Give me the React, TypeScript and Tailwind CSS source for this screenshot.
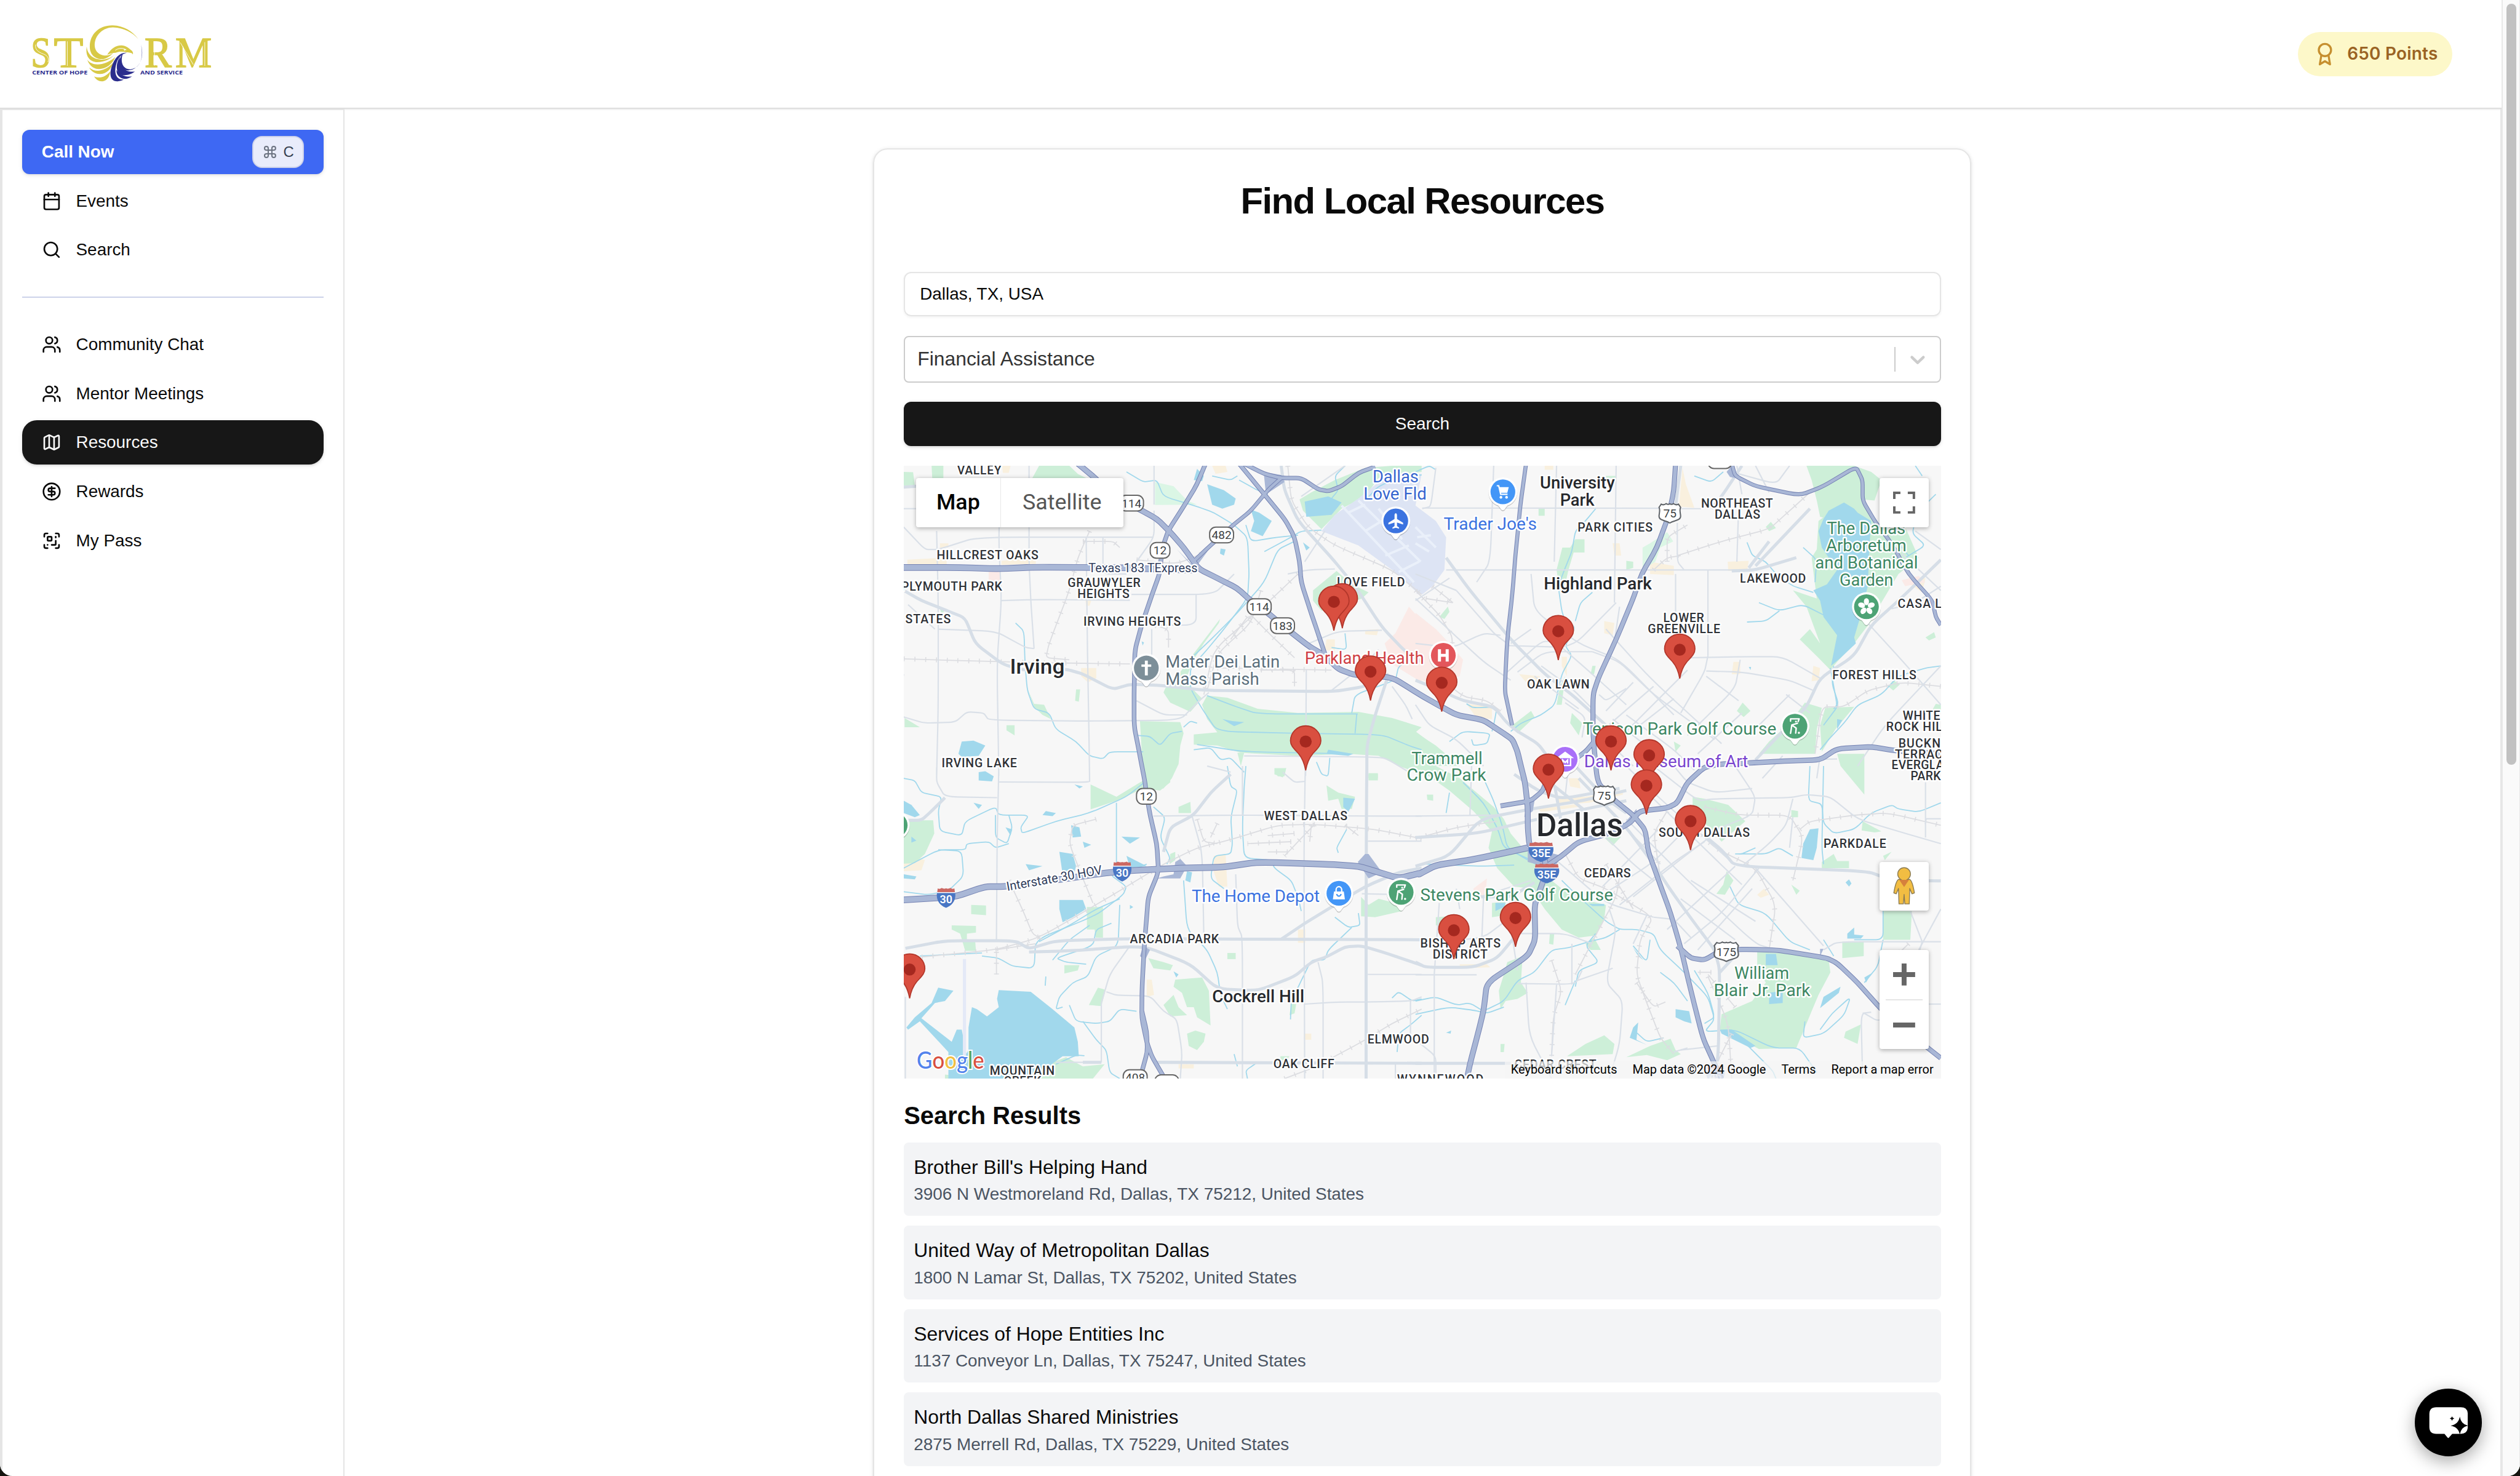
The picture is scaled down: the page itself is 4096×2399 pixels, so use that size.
import React from "react";
import { Calendar, CircleDollarSign, Command, Map as MapIcon, Search, Users } from "lucide-react";

/* ------------------------------------------------------------------ */
/* Map geometry: coordinates are stored per tile (A/B over C/D) and    */
/* projected to the 846x500 map canvas.                                */
/* ------------------------------------------------------------------ */

const TILES: Record<string, [number, number, number]> = {
  A: [0.27423, -7.5, -5],
  B: [0.27743, 417.5, -5],
  C: [0.27423, -7.5, 245],
  D: [0.27743, 417.5, 245],
};

type Pt = [number, number];

function at(tile: string, x: number, y: number): Pt {
  const [s, ox, oy] = TILES[tile];
  return [+(x * s + ox).toFixed(1), +(y / 6 + oy).toFixed(1)];
}

function points(spec: string): Pt[] {
  const out: Pt[] = [];
  let tile = "A";
  let pending: number | null = null;
  for (const tok of spec.split(/\s+/)) {
    if (!tok) continue;
    if (TILES[tok]) {
      tile = tok;
      continue;
    }
    if (pending === null) pending = +tok;
    else {
      out.push(at(tile, pending, +tok));
      pending = null;
    }
  }
  return out;
}

function area(spec: string) {
  return "M" + points(spec).map((p) => p.join(" ")).join("L") + "Z";
}

function line(spec: string) {
  const p = points(spec);
  if (p.length < 3) return "M" + p.map((q) => q.join(" ")).join("L");
  let d = "M" + p[0].join(" ");
  for (let i = 1; i < p.length - 1; i++) {
    const a = p[i - 1];
    const b = p[i];
    const c = p[i + 1];
    const k = 0.75;
    const s1 = [b[0] + (a[0] - b[0]) * (1 - k), b[1] + (a[1] - b[1]) * (1 - k)];
    const s2 = [b[0] + (c[0] - b[0]) * (1 - k), b[1] + (c[1] - b[1]) * (1 - k)];
    d += `L${s1[0].toFixed(1)} ${s1[1].toFixed(1)}Q${b[0]} ${b[1]} ${s2[0].toFixed(1)} ${s2[1].toFixed(1)}`;
  }
  return d + "L" + p[p.length - 1].join(" ");
}

const AIRPORT = "A 1270 350 1310 270 1380 190 1440 110 1500 75 1568 70 B 0 225 60 300 90 380 85 540 50 620 20 660 0 650 A 1568 670 1480 540 1380 420";

const RUNWAYS = [
  "A 1330 225 1545 600", "A 1380 200 1565 500", "A 1350 260 1400 220", "A 1400 350 1450 300", "A 1460 470 1530 420",
  "A 1500 550 1560 500", "B 0 330 60 430", "B 0 410 40 450", "A 1440 240 1510 390", "B 5 380 45 370",
];

const PINK = [
  "A 1530 720 1568 790 1568 1090 1480 1000 1458 900 1490 850",
  "B 0 750 60 830 100 900 140 980 130 1060 70 1100 20 1080 0 1070",
  "A 280 545 315 545 315 595 280 595",
  "D 170 600 210 550 205 640 175 640",
  "B 1430 590 1480 570 1500 600 1440 620",
];

const BEIGE = [
  "A 38 490 155 480 155 515 38 515", "A 318 495 420 480 420 510 318 515", "A 555 1020 600 1020 600 1070 575 1090 555 1060",
  "A 320 30 345 30 340 65 322 65", "A 945 30 985 30 990 60 955 70", "A 1400 835 1440 830 1435 860 1400 855",
  "A 1285 880 1310 880 1310 945 1280 930", "A 568 690 585 690 580 715 570 715", "A 135 410 160 410 160 430 135 430",
  "C 950 440 985 430 990 590 965 590 950 520", "C 750 1045 765 1045 772 1120 750 1130", "C 1200 800 1222 800 1222 865 1200 865",
  "C 27 478 60 440 90 460 80 510 27 515", "C 1218 1310 1240 1310 1240 1340 1218 1340", "C 845 1460 890 1460 890 1480 845 1480",
  "B 380 30 405 30 405 50 380 50", "B 580 410 600 410 605 470 585 470", "B 690 500 760 520 760 565 690 560",
  "B 918 500 980 495 975 545 920 545", "B 785 40 795 120 820 235 775 230", "B 430 965 445 965 445 1060 430 1010",
  "B 150 1195 225 1210 225 1270 180 1265", "B 305 1050 365 1060 370 1120 330 1100", "B 555 790 585 800 580 860 555 850",
  "B 935 990 955 990 955 1050 930 1050", "B 1170 1010 1190 1020 1185 1080 1165 1085", "B 1450 570 1500 580 1490 650 1455 610",
  "D 420 150 500 150 610 125 610 140 510 180 420 190", "D 130 970 210 970 220 985 130 990", "D 1005 630 1025 600 1040 630 1015 645",
  "D 450 60 480 60 485 110 455 100", "D 360 210 480 185 480 200 370 225",
];

const GREEN = [
  "A 27 60 55 62 60 125 27 128", "A 110 30 145 30 145 90 112 90", "A 410 90 430 30 520 30 545 70 570 90",
  "A 1205 195 1240 160 1310 100 1400 40 1480 30 1568 30 1568 60 1440 90 1400 180 1330 240 1270 340 1215 250",
  "A 968 780 885 960 850 1040 805 1120 800 1140 820 1190 880 1235 915 1170 885 1120 870 1060 890 980 920 900 965 800",
  "A 930 1155 990 1165 1080 1220 1200 1240 1380 1235 1480 1265 1568 1310 B 0 1335 60 1400 130 1500 D 60 0 130 60 180 130 230 200 260 260 280 330 310 390 350 450 400 560 430 600 460 640 560 680 555 750 530 830 480 840 430 800 380 700 340 600 290 590 240 500 215 400 225 320 170 220 100 120 40 50 0 10 C 1560 0 A 1550 1530 1500 1500 1440 1450 1350 1440 1200 1450 1030 1435 960 1400 890 1395 890 1345 960 1335 930 1270 915 1200",
  "A 730 1280 850 1285 860 1340 850 1400 845 1490 825 1560 C 800 110 770 118 745 95 A 742 1560 735 1430",
  "C 583 90 660 150 740 70 820 10 820 80 790 120 740 110 660 170 583 212",
  "C 27 265 115 265 118 330 90 430 60 475 27 478", "C 835 1045 880 1040 915 1035 935 1100 940 1270 900 1230 890 1180 870 1180 855 1110 830 1080",
  "C 800 1170 830 1120 845 1180 870 1220 820 1225", "C 870 1310 895 1295 925 1310 920 1350 900 1390 875 1370",
  "C 605 1085 628 1095 615 1175 578 1170", "C 470 1450 510 1425 560 1470 625 1460 590 1530 420 1530",
  "C 755 940 800 960 828 975 820 1000 770 990", "C 572 690 620 690 620 840 598 840 595 800 572 800", "C 170 780 242 783 242 815 215 820 215 860 240 860 242 905 210 905 195 820 170 800",
  "C 228 680 272 683 272 730 228 725", "C 845 200 880 175 882 230 845 230", "C 1285 95 1320 130 1370 150 1360 210 1330 210 1320 160 1290 170",
  "C 1388 640 1410 680 1440 650 1510 680 1510 710 1430 740 1388 735", "C 1180 1165 1195 1165 1190 1210 1175 1220", "C 990 915 1015 915 1015 945 990 945",
  "C 505 975 550 975 545 1000 505 1015", "C 820 430 835 420 835 460 818 480", "C 1148 1420 1175 1420 1165 1440 1148 1440", "C 150 1510 200 1520 200 1530 150 1530",
  "A 1315 545 1360 610 1410 650 1390 680 1330 720 1270 740 1245 690 1245 640", "A 540 1125 552 1125 548 1185 537 1180", "A 333 1300 357 1300 357 1350 333 1325",
  "A 30 1265 75 1310 30 1310", "A 395 1120 415 1195 445 1200 465 1270 440 1250 415 1210", "A 1020 1435 1040 1435 1030 1500", "A 1130 1520 1165 1510 1160 1550 1140 1550",
  "A 1410 1540 1438 1540 1438 1560 1410 1560", "C 1410 35 1438 35 1438 70 1410 70", "C 1130 10 1165 10 1155 55 1130 40", "A 135 730 155 730 140 755",
  "B 1150 30 1290 30 1340 60 1370 100 1350 200 1315 195 1300 280 1240 300 1190 280 1180 200 1165 100",
  "B 1165 480 1180 440 1185 300 1260 205 1320 200 1360 310 1440 330 1480 480 1420 560 1370 700 1340 790 1290 900 1240 990 1220 1030 1185 970 1130 880 1160 830 1190 900 1150 720 1110 640 1180 680",
  "B 1145 1190 1195 1215 1180 1320 1175 1440 1010 1440 1040 1380 1100 1290", "B 1205 1215 1290 1210 1235 1320 1195 1430 1190 1300",
  "B 1240 1440 1320 1440 1320 1560 D 1320 140 1250 0", "B 470 390 497 390 497 455 465 455 450 540 440 610 425 650 415 540 432 430 455 430",
  "B 362 240 380 240 380 275 362 275", "B 620 495 640 500 640 530 620 540", "B 560 80 590 80 590 90 560 90", "B 1030 330 1045 305 1060 335 1040 350",
  "B 70 770 95 720 100 745 85 780", "B 425 1110 440 1060 430 1200 415 1200", "B 460 1240 490 1290 480 1350 455 1290", "B 285 1300 340 1230 350 1260 300 1340",
  "B 945 1230 962 1190 985 1230 965 1260", "B 1390 1110 1405 1080 1425 1100 1405 1130", "B 0 1330 40 1380 70 1420 0 1430", "B 1500 870 1525 845 1530 870 1510 885",
  "B 760 1380 780 1400 765 1430", "B 520 1010 530 1010 525 1050 515 1050", "B 1545 1200 1530 1195 1520 1225 1545 1225",
  "D 815 150 850 160 920 190 970 270 900 370 870 310 830 250 815 200", "D 555 350 605 345 580 390", "D 905 580 915 515 935 560 910 630 885 625",
  "D 1005 910 1080 915 1215 950 1220 1010 1185 1120 1165 1200 1140 1300 1120 1380 1010 1385 960 1340 895 1290 900 1215 990 1150 1030 1060 1005 1000",
  "D 1375 710 1460 710 1455 850 1375 850", "D 1255 860 1318 860 1318 930 1255 940", "D 445 1420 500 1360 555 1318 585 1360 580 1410",
  "D 620 1425 690 1370 750 1335 765 1390 780 1410 740 1440 680 1415", "D 1195 470 1230 430 1240 465 1275 465 1275 500 1195 500",
  "D 250 1190 245 1100 260 1020 270 960 315 930 310 1060 330 1110 300 1140 265 1150", "D 225 670 265 665 265 730 225 740", "D 500 870 525 840 545 900 515 900",
  "D 395 820 408 820 405 875 393 870", "D 1105 215 1125 220 1125 250 1105 250", "D 1315 270 1370 320 1350 325 1312 315", "D 1375 440 1400 420 1380 460",
  "D 1265 1300 1310 1265 1300 1360 1260 1330", "D 33 140 52 140 52 170 35 165", "D 250 1360 262 1360 260 1400 250 1400", "D 1105 580 1130 610 1120 630", "D 60 740 100 735 100 790 60 780",
];

const PALE = ["A 775 110 830 130 870 200 900 220 775 222", "B 668 430 690 410 740 355 758 400 720 430 705 500 668 540"];

const WATER = [
  "C 310 1097 405 1105 470 1190 535 1280 545 1350 548 1420 500 1420 450 1480 400 1530 160 1530 200 1450 220 1390 220 1280 230 1180 245 1190 275 1225 310 1180 305 1140",
  "C 130 1085 175 1100 150 1150 120 1160 80 1235 170 1350 185 1290 200 1290 215 1420 200 1530 160 1530 160 1400 75 1250 40 1290 35 1280 60 1230 110 1160",
  "B 1200 290 1215 250 1260 210 1290 240 1300 260 1340 300 1335 420 1330 620 1310 760 1290 870 1295 900 1250 970 1222 1010 1240 860 1200 770 1190 690 1170 640 1210 610 1240 540 1195 430 1185 350",
  "A 930 120 980 150 1015 190 1010 220 975 240 945 220", "A 1060 245 1085 260 1122 300 1095 375 1060 350 1070 300", "A 1220 205 1290 180 1330 210 1300 270 1225 280",
  "A 190 1440 200 1380 235 1375 270 1400 250 1450 200 1455", "A 900 45 920 80 915 105 890 100", "C 250 30 270 25 295 50 290 75 250 70",
  "A 970 435 985 440 980 470 968 460", "A 1215 405 1235 430 1225 445", "A 975 1270 1005 1280 1040 1285 1010 1305", "A 1290 1420 1365 1440 1350 1450 1285 1440",
  "C 525 290 550 300 555 345 530 350", "C 490 420 530 430 540 490 530 550 500 530", "C 490 655 560 655 570 700 530 740 500 765 490 700", "C 690 440 750 490 700 500",
  "C 870 515 885 520 880 570 865 560", "C 1335 155 1370 160 1350 225 1335 200", "C 27 170 50 190 75 240 60 250 27 230", "C 235 180 260 190 250 210", "C 330 300 350 310 345 340",
  "C 560 370 585 385 565 400", "C 675 345 730 350 700 380", "C 27 530 65 540 60 555 27 550", "C 50 345 65 365 50 375", "C 830 1005 845 1020 838 1035", "C 390 480 440 490 400 510", "C 700 680 710 690 700 700",
  "D 1160 310 1185 305 1180 400 1170 460 1135 450 1140 380", "D 765 1190 805 1200 812 1260 790 1250 765 1230", "D 1030 920 1060 920 1065 975 1030 975",
  "D 1200 1130 1250 1080 1245 1110 1190 1185", "D 1270 820 1290 790 1290 825 1318 830 1310 845 1270 845", "D 640 1280 655 1255 650 1340 680 1365 630 1330",
  "D 510 675 555 675 555 685 520 685", "D 235 670 265 670 260 690 235 710", "D 1265 570 1275 555 1282 575 1275 590", "D 895 1290 930 1290 1000 1370 985 1380 900 1310",
  "D 1040 1110 1080 1100 1080 1160 1040 1165", "D 640 890 670 950 655 930", "D 90 1305 105 1295 103 1310", "D 1320 1035 1340 1015 1325 1060",
  "B 980 1015 987 1015 985 1030", "B 1240 1270 1255 1275 1240 1320", "A 735 890 742 895 738 910", "C 450 220 480 230 470 245 440 240", "C 535 90 560 100 550 110",
];

const STREAMS = [
  "A 360 800 385 840 388 1000 395 1130 415 1220 460 1240 480 1320 540 1380 580 1450 620 1465 640 1430 740 1430",
  "A 1568 75 1500 90 1440 130 1400 200", "A 690 60 740 110 780 100 800 180 900 230 950 260 1010 320 1050 380 1055 560 1050 680 980 830 930 930 880 1020 880 1120 915 1220 960 1330 1200 1340 1450 1345 1530 1400 1568 1420",
  "A 1100 450 1180 380 1210 350 1270 345", "A 930 1155 1000 1200 1080 1245 1378 1245", "A 900 1395 1040 1430 1340 1440", "A 1340 30 1310 80 1320 150 1300 190",
  "A 725 1350 760 1355 790 1400 820 1340 855 1330", "A 860 1310 880 1280 900 1290", "A 890 1420 940 1410 970 1470 1000 1460 1040 1530", "A 1255 1480 1270 1540 1290 1550 1295 1460",
  "A 1300 920 1345 930 1340 850", "A 1568 950 1500 1010 1490 1080 1370 1150 1360 1240", "A 1375 1245 1370 1340", "A 1045 320 1060 400 1140 380 1200 370", "A 1025 100 1080 150 1110 170", "A 945 80 1000 100 1020 80",
  "A 1190 400 1140 440 1100 600 1020 750 960 850 890 960", "C 990 0 1000 100 1020 120 1000 250 1005 380 1000 430 950 440 940 550 980 600", "C 1045 0 1040 100 1035 300 1040 450 1120 460 1130 500 1180 560 1200 640 1210 710",
  "C 770 200 805 250 790 350 820 450 810 480", "C 750 480 720 500 640 530 690 590 680 630 600 730 420 850 415 990 350 980 310 940 260 930",
  "C 27 60 60 70 80 130 140 150 130 220 135 320 200 340 210 270 300 200 310 240 400 240 375 300 380 330 480 270 580 230 690 150 750 70",
  "C 300 240 300 350 335 380 350 300 340 240", "C 27 500 130 410 210 410 215 380 280 370 300 400 340 380", "C 130 410 200 415 205 540 160 610 100 630 27 615", "C 660 180 660 500", "C 75 930 260 915",
  "C 670 680 665 880 600 930 575 1030 530 1060 490 1130 480 1190 500 1180", "C 645 770 600 800 590 880 480 940 510 960 570 970", "C 860 560 870 800 930 900 960 1010 970 1120 990 1190",
  "C 520 1170 540 1250 600 1260 640 1250 670 1190 720 1200", "C 560 1250 600 1340 630 1390 640 1500 670 1530", "C 1310 740 1350 790 1385 780 1380 720", "C 1360 790 1290 900 1280 950 1240 950 1210 1050 1180 1150 1178 1240",
  "C 1568 1220 1540 1260 1500 1310 1495 1400", "C 1480 1135 1500 1105 1540 1150 1568 1140", "C 1010 1410 1020 1470", "C 1050 1530 1045 1490 1080 1450", "C 1320 425 1315 400 1345 310", "C 450 1030 448 1075", "C 580 780 520 850 470 950",
  "C 480 1460 540 1415 565 1418", "C 430 860 520 780 600 700 670 650", "C 655 540 690 500",
  "B 530 240 500 300 470 350 460 450 440 530 420 620 430 740 440 790 470 820 440 910 460 960 430 1050 410 1200 370 1250 310 1290 280 1330", "B 520 650 485 700 470 790", "B 0 60 40 30 60 50",
  "B 975 405 990 470 1030 500 1060 560 1110 620 1170 650", "B 1140 430 1180 490 1175 600", "B 1010 700 1070 740 1140 710 1200 760", "B 975 795 1030 790 1070 740", "B 820 80 870 110 905 60", "B 1470 30 1490 80",
  "B 1230 1010 1225 1100 1245 1200 1200 1300", "B 1220 1020 1240 1200 1230 1220", "B 1545 1010 1500 1020 1420 1060 1370 1150 1300 1200 1260 1290 1220 1360 1190 1420", "B 1530 170 1480 250 1460 360 1500 420 1440 480",
  "B 150 1195 170 1215 240 1210 230 1300 225 1330", "B 100 1380 140 1330 220 1340 210 1390 170 1400 165 1370", "B 1420 410 1450 470", "D 1000 400 960 430 940 430",
  "D 100 130 90 230", "D 140 80 200 180 240 300 260 400 340 460", "D 200 60 230 170 255 290 270 400 330 460 400 520", "D 430 560 480 640 560 760 600 800 650 800 700 820 720 900 790 1010 860 1130 880 1240 850 1300 940 1290 1050 1380 1130 1380 1180 1500",
  "D 1160 0 1155 170 1195 185 1200 280 1230 330 1290 310 1340 230 1400 190 1420 210 1480 225 1545 180", "D 1200 0 1195 400 1200 480", "D 950 430 1030 430 1070 400 1110 440", "D 925 590 950 680 1030 720 1100 860 1160 900",
  "D 0 1150 60 1130 120 1170 160 1160 200 1200 260 1150 300 1050 350 1010 400 900 450 890 510 860 560 840 600 800", "D 0 1215 100 1180 170 1195 210 1210 260 1180", "D 470 1080 480 1000 540 960 500 880 530 820", "D 440 1170 470 1050",
  "D 640 880 680 960 690 850", "D 1145 1250 1140 1330 1200 1310 1260 1220 1280 1130 1225 1210 1190 1290", "D 1375 710 1375 850 1290 850", "D 1375 850 1360 980 1320 1060", "D 1230 930 1200 850", "D 640 1290 680 1350 730 1330",
  "D 820 1000 860 1110 880 1230 850 1260", "D 720 1010 760 1060 800 1150", "D 30 480 200 490 290 485", "D 960 1340 1050 1490 1060 1530",
];

const MINOR = [
  "A 125 350 130 700 130 1200 125 1560 C 125 0 125 80 150 150 305 155", "A 315 130 310 400 318 690 305 990 310 1560 C 310 0 305 400 303 850", "A 400 30 400 500 405 690 415 925", "A 27 240 65 240",
  "A 27 330 90 440 130 440 245 380 770 380", "A 318 690 420 685 700 688", "A 705 660 950 660 1010 560", "A 897 660 897 810 750 810", "A 570 380 572 740 580 1560 C 580 80 310 78", "A 620 380 620 560 690 560",
  "A 772 30 772 220", "A 772 250 772 380 720 500", "A 765 830 765 1000", "A 130 830 300 840 390 920 415 925", "A 40 710 120 830", "A 720 1180 800 1250 870 1250", "A 27 1260 90 1290 180 1285 215 1235 265 1240 280 1275 580 1280 850 1275 900 1190 935 1140",
  "A 1225 1030 1223 1560 C 1222 0 1218 400 1220 1530", "A 1040 1450 1400 1455 1460 1460 1530 1530", "A 1170 560 1230 540 1310 535", "A 1220 500 1280 350", "A 1300 1130 1400 1000 1440 930", "A 1225 905 1320 840 1450 835",
  "A 1480 1110 1520 1200 1540 1270", "A 1340 30 1210 180", "A 27 1050 20 1100", "C 770 245 1035 240 1400 245 1568 245", "C 885 245 915 420 920 830", "C 1035 0 1035 240", "C 1015 530 1020 780 1035 840 1035 1530",
  "C 1408 368 1568 368", "C 1220 1165 1320 1155 1420 1155 1535 1150 1568 1130", "C 1535 1150 1535 1320", "C 1260 960 1275 1060 1275 1530", "C 630 1105 660 1122 760 1125 800 1200 840 1240 855 1400 850 1530", "C 615 1160 615 1450", "C 700 880 640 1020 615 1160",
  "C 1408 1020 1568 1020", "C 780 1455 1568 1455", "C 480 1450 615 1450", "C 32 1130 32 1530", "C 1390 625 1470 628", "C 1490 1455 1490 1530", "C 1155 30 1190 80 1222 75", "C 1000 30 930 0",
  "B 60 40 45 230 20 240", "B 230 30 220 500 180 600", "B 415 30 408 500", "B 590 30 585 700", "B 20 237 740 238", "B 740 240 840 240", "B 90 540 1000 540", "B 770 310 770 500 790 540", "B 765 560 765 860", "B 860 540 860 960",
  "B 950 240 945 500", "B 945 30 960 170", "B 1000 30 1040 160", "B 1100 30 1060 120 930 60", "B 590 700 460 920 270 910", "B 600 720 580 950 535 1060", "B 100 580 0 690", "B 0 560 120 640", "B 340 560 350 740 480 900 600 980 760 1250",
  "B 280 900 340 830", "B 270 1040 370 890 420 890", "B 300 1040 380 940 520 940", "B 410 890 520 1050 620 1200", "B 520 940 600 990 700 1150 880 1370", "B 560 830 690 1070 900 1390", "B 800 970 960 965 1080 965 1190 1070",
  "B 860 960 850 1040 780 1240", "B 855 1035 960 1040 1100 1080 1170 1130", "B 855 1060 950 1180", "B 955 980 940 1120 800 1350", "B 800 1030 620 1330", "B 760 1170 560 1430", "B 700 1110 540 1340", "B 640 1090 560 1230",
  "B 960 1240 830 1440", "B 1100 1150 980 1350", "B 1090 1150 1160 1240", "B 1330 800 1440 1000 1545 1200", "B 1545 620 1470 700 1400 730", "B 1430 460 1545 640", "B 1470 350 1545 440", "B 1300 1500 1380 1300 1545 1010",
  "B 0 680 90 820 200 990 280 1080", "B 0 900 110 920 200 850 250 860", "B 120 640 230 850 270 900", "B 440 1190 500 1260 490 1360", "B 370 1010 460 1120 520 1220", "B 350 1060 480 1220", "B 540 1150 560 1180 620 1120",
  "B 620 1250 760 1420 820 1520", "B 580 1270 700 1430", "B 540 1340 640 1500", "B 0 1200 40 1300 120 1370 200 1500", "B 1040 1470 1240 1465", "B 1190 1450 1180 1560", "B 1080 1450 1020 1560",
  "D 165 0 160 240", "D 0 245 240 240", "D 450 0 440 150", "D 620 0 700 130 780 250 850 350 930 470", "D 700 0 830 170 880 160 1100 155 1150 140 1220 150 1300 260 1420 320 1545 380", "D 760 0 800 80 880 130 990 110", "D 940 0 1000 150 990 240 870 320",
  "D 1110 250 1100 400", "D 1500 80 1500 350", "D 1500 258 1545 258", "D 1110 160 1090 290 1040 380 960 490", "D 880 330 800 430 640 640", "D 850 370 760 470 600 680", "D 800 300 700 470 560 620", "D 720 300 550 590", "D 940 490 830 660 740 800",
  "D 1010 500 900 720 790 870", "D 990 600 830 900", "D 700 160 860 420 960 580", "D 620 260 800 560 1000 870 1060 900", "D 560 200 720 480", "D 530 300 640 480 700 560", "D 810 560 1000 760", "D 1000 500 1200 880", "D 780 650 940 850",
  "D 300 820 440 820 520 870", "D 300 1065 470 1068 490 1000", "D 0 850 70 860 200 840 280 740", "D 0 1022 180 1022", "D 55 1022 55 1530", "D 70 670 55 1020", "D 120 600 130 700", "D 325 1060 335 1320 400 1530", "D 415 1070 400 1420",
  "D 460 870 460 1070", "D 570 700 590 800 560 1060 610 1150 600 1360 570 1530", "D 475 1050 580 990", "D 680 730 640 870", "D 200 640 195 850", "D 190 640 340 560", "D 280 790 300 1000", "D 700 740 760 750 810 840",
  "D 1200 900 1240 860 1545 860", "D 1490 860 1430 1200 1360 1250 1310 1200 1315 1530", "D 1340 1205 1315 1210", "D 1500 1165 1545 1165", "D 990 1530 960 1450", "D 780 1390 890 1370", "D 760 1400 800 1380", "D 1455 710 1490 860", "D 1430 660 1380 680",
  "D 420 470 560 670 700 740", "D 0 1340 60 1420 60 1530", "D 1545 700 1480 900",
];

const MAJOR = [
  "A 27 135 65 130", "A 27 640 80 690 150 735 210 775 240 900 320 1000 380 1030 510 1025 560 1050 650 1125 700 1100 790 1105 930 1130 1110 1132 1310 1135 1400 1110 1470 1050",
  "A 1150 30 1160 150 1200 300 1300 480 1370 620 1450 820 1520 940 1568 990", "A 1470 1050 1430 1250 1405 1400 1405 1560 C 1405 0 1403 500 1403 1530", "C 32 892 150 855 360 855 400 895 480 855 700 845 1160 848 1568 850",
  "C 1150 848 1220 770 1300 690 1400 590 1500 520 1568 500", "C 400 910 520 905 740 880 880 970 960 1090 1080 1100 1190 1030 1240 960 1290 930 1340 885 1390 880 1470 920 1568 975",
  "C 27 265 80 265 110 220 150 155", "C 1000 40 940 130 890 240 820 300 800 420", "C 560 1450 615 1450", "C 780 1450 1568 1455", "B 90 480 160 640 280 880 380 1050 460 1150 560 1300",
  "B 780 30 765 230", "B 1120 480 1000 540 930 545", "B 960 30 900 180 870 240", "B 1040 400 980 530", "B 1160 240 1000 520", "B 1545 490 1440 660 1340 810 1290 960 1190 1070 1150 1210 1080 1330 1000 1470",
  "B 0 1080 60 1120 140 1180 230 1210 270 1290 300 1330 360 1390 400 1480", "D 0 350 180 330 360 260 500 210 620 170", "D 0 490 100 440 190 260 340 210 490 170 620 120", "D 850 340 900 410 940 490 1330 515 1400 560 1545 562",
  "D 700 480 760 630 830 790 880 900 895 1000 890 1440 870 1530", "D 480 60 620 300 700 480", "D 0 960 30 985 170 985 240 940 300 820", "D 0 1455 280 1455", "D 350 570 280 640 210 640 60 640", "D 895 1010 950 910", "D 290 40 360 120 430 160 600 110",
  "D 470 0 560 160 620 230", "D 410 100 430 290", "D 380 60 500 220",
];

const RAILS = [
  "A 27 975 220 985 460 995 700 1000", "A 580 350 545 480 520 640 460 900 450 970 520 980", "A 560 400 650 400 670 430", "A 720 490 840 510 930 450", "A 1170 30 1180 200 1230 330 1310 420 1480 540 1568 660", "A 1090 640 1060 800 960 950 930 1130",
  "A 1060 760 1120 860 1190 970", "A 960 1020 1300 1030", "A 1090 1030 1190 1030 1190 1110", "A 1200 560 1110 700 950 930 920 1150", "A 1050 770 1000 880", "A 745 800 815 830 815 920",
  "C 1568 355 1430 310 1250 285 1140 290 1000 360 900 400 800 480 640 640 430 840 300 900 80 935", "C 1250 285 1200 370 1160 440", "C 600 260 530 290 520 380 560 550 590 670", "C 340 560 380 700 410 820 440 850", "C 900 260 920 370 960 380", "C 960 280 940 350", "C 1190 330 1110 340",
  "C 1180 370 1050 380", "C 1170 420 1110 420", "C 1240 290 1235 370", "C 1340 290 1380 340", "C 303 910 303 1020", "C 1300 1430 1390 1350 1480 1260 1568 1190", "C 300 900 420 870", "C 1160 1530 1240 1480",
  "B 770 470 900 400 1040 340 1100 250 1160 160", "B 740 500 740 380 800 320", "B 700 540 740 480 780 470", "B 30 680 110 700", "B 0 640 70 760 110 870 100 1000", "B 50 620 110 700", "B 60 1050 140 1160 210 1180 250 1230",
  "B 1545 1110 1430 1090 1330 1130 1260 1210 1195 1210 1175 1440", "D 0 355 120 300 240 270", "D 440 430 480 550 560 600 700 740 660 850 650 1020 680 1160 720 1330 760 1410", "D 650 1060 700 1180 735 1155", "D 600 540 590 640 520 860 470 1020",
  "D 400 950 430 1100 405 1230 400 1420", "D 740 220 700 330 720 540", "D 820 300 880 400 1000 500 1060 680 1040 900", "D 1130 310 1160 270 1290 240 1390 230 1545 290", "D 850 200 950 240 1100 240 1140 350 1110 560", "D 860 1030 920 1260 930 1530", "D 930 1310 890 1440 880 1530",
  "D 1450 870 1370 1000", "D 560 480 640 700", "D 870 1010 830 1010", "D 940 1180 860 1020",
];

const HIGHWAYS: [string, number][] = [
  ["A 0 528 200 528 310 534 420 526 580 528 700 530 800 538 890 540", 4.6],
  ["A 1150 90 1110 150 1060 250 1000 330 940 420 885 505", 2.6],
  ["A 1040 20 1100 70 1150 90 1210 90 1260 145 1290 155 1330 130 1380 65 1430 35", 2.8],
  ["B 325 20 310 200 295 450 285 650 270 880 262 1130 275 1230 284 1300", 2.6],
  ["B 930 20 940 80 1000 130 1130 175 1200 130 1295 35 1315 100 1315 200 1350 300 1400 410 1450 560 1520 690 1530 770 1545 810", 2.6],
  ["D 250 195 340 170 375 120 390 40 B 440 1500 500 1430 525 1380", 3.2],
  ["D 770 880 810 940 850 950 900 900 980 897 1070 902 1210 940 1240 965 1300 1060 1364 1180 1400 1240 1545 1430", 3.4],
  ["B 1545 1440 1410 1425 1340 1405 1240 1415 1190 1470 1100 1475 980 1485 900 1490 850 1505 D 800 80 770 180 740 205 660 220 630 280 570 330 480 370 430 440 385 490", 3.6],
  ["D 330 400 180 455 60 485 10 530 C 1560 525 1500 550 1440 520 1380 490 1300 482 1080 470 980 495 850 500 700 512 620 525 470 560 330 590 270 590 180 640 20 656", 4.6],
  ["A 925 20 900 120 860 230 815 345 795 440 790 550 760 690 735 810 715 930 713 1100 712 1300 730 1450 745 1580 C 748 120 760 240 780 380 785 520 755 640 748 780 742 900 736 1100 735 1230 750 1350 765 1420 800 1520", 3],
  ["C 736 1200 750 1300 752 1400 735 1500", 3],
  ["A 1025 20 1100 170 1160 290 1190 380 1205 500 1210 600 1235 730 1260 850 1282 960", 3],
  ["A 545 20 600 95 640 170 725 240 780 290 820 355 860 430 905 535 960 580 1020 630 1060 690 1110 750 1160 820 1230 910 1280 960 1320 1025 1370 1055 1480 1065 1568 1155 B 60 1195 120 1250 200 1275 250 1330 285 1370 300 1430 310 1500 322 1580 D 330 200 330 300 335 390 380 450 385 520 370 590 350 680 352 850 330 930 210 1060 200 1200 185 1300 160 1460 150 1540", 4],
  ["B 765 20 760 150 745 270 710 430 665 560 640 680 590 880 540 1060 522 1150 522 1350 535 1580 D 580 160 640 240 675 310 685 420 715 560 750 720 780 890 810 1100 845 1330 880 1460 900 1530", 3.4],
];

const INTERCHANGES = [
  "A 1098 60 1150 75 1160 110 1105 170", "C 1378 470 1400 430 1410 430 1450 520 1410 550", "D 378 490 330 470 330 400 410 430 430 440 385 560", "D 330 160 350 170 345 220 320 250", "A 840 440 895 530 935 440 885 520", "C 835 470 850 455 870 490 850 550 780 550 800 540 830 530", "C 740 880 760 900 745 950 730 930",
  "D 610 290 650 210 650 260 680 300 640 260", "B 915 60 930 30 955 95 925 85", "D 1190 895 1200 895 1190 930",
];

type Label = { t: string; x: number; y: number; w: number };

const tl = (tile: string, x0: number, x1: number, y: number, t: string): Label => {
  const [px, py] = at(tile, x0, y);
  const [qx] = at(tile, x1, y);
  return { t, x: px, y: py, w: qx - px };
};

const AREAS: Label[] = [
  tl("A", 186, 318, 71, "VALLEY"), tl("A", 125, 428, 488, "HILLCREST OAKS"), tl("A", 20, 320, 639, "PLYMOUTH PARK"), tl("A", 515, 732, 621, "GRAUWYLER"), tl("A", 544, 699, 675, "HEIGHTS"),
  tl("A", 32, 167, 801, "STATES"), tl("A", 562, 852, 813, "IRVING HEIGHTS"), tl("A", 1316, 1518, 618, "LOVE FIELD"), tl("A", 140, 364, 1506, "IRVING LAKE"),
  tl("B", 840, 1051, 234, "NORTHEAST"), tl("B", 880, 1014, 289, "DALLAS"), tl("B", 477, 697, 351, "PARK CITIES"), tl("B", 954, 1148, 600, "LAKEWOOD"), tl("B", 729, 849, 795, "LOWER"),
  tl("B", 683, 896, 849, "GREENVILLE"), tl("B", 328, 512, 1119, "OAK LAWN"), tl("B", 1226, 1473, 1074, "FOREST HILLS"), tl("B", 1418, 1636, 726, "CASA LINDA"), tl("B", 1433, 1543, 1272, "WHITE"),
  tl("B", 1384, 1592, 1326, "ROCK HILLS"), tl("B", 1420, 1590, 1407, "BUCKNER"), tl("B", 1410, 1572, 1461, "TERRACE"), tl("B", 1400, 1598, 1515, "EVERGLADE"), tl("D", 1456, 1545, 69, "PARK"),
  tl("C", 1099, 1347, 262, "WEST DALLAS"), tl("C", 700, 965, 867, "ARCADIA PARK"), tl("C", 1127, 1308, 1476, "OAK CLIFF"), tl("C", 1407, 1590, 1356, "ELMWOOD"), tl("C", 283, 476, 1509, "MOUNTAIN"),
  tl("C", 325, 436, 1563, "CREEK"), tl("D", 496, 633, 543, "CEDARS"), tl("D", 715, 983, 346, "SOUTH DALLAS"), tl("D", 1200, 1384, 400, "PARKDALE"), tl("D", 14, 250, 888, "BISHOP ARTS"),
  tl("D", 51, 212, 942, "DISTRICT"), tl("D", -54, 200, 1552, "WYNNEWOOD"), tl("D", 291, 532, 1480, "CEDAR CREST"),
];

const TOWNS: (Label & { s: number })[] = [
  { ...tl("A", 343, 506, 1047, "Irving"), s: 17 }, { ...tl("B", 366, 586, 141, "University"), s: 14.2 }, { ...tl("B", 425, 526, 225, "Park"), s: 14.2 },
  { ...tl("B", 377, 695, 634, "Highland Park"), s: 14.2 }, { ...tl("C", 945, 1219, 1156, "Cockrell Hill"), s: 14.2 }, { ...tl("D", 355, 610, 342, "Dallas"), s: 26 },
];

const POIS: (Label & { c: string })[] = [
  { ...tl("A", 1422, 1559, 112, "Dallas"), c: "#3565cf" }, { ...tl("A", 1395, 1583, 196, "Love Fld"), c: "#3565cf" }, { ...tl("B", 83, 357, 343, "Trader Joe's"), c: "#3b72e0" },
  { ...tl("C", 884, 1265, 664, "The Home Depot"), c: "#3b72e0" }, { ...tl("A", 806, 1146, 1018, "Mater Dei Latin"), c: "#5b6f7c" }, { ...tl("A", 806, 1085, 1102, "Mass Parish"), c: "#5b6f7c" },
  { ...tl("A", 1220, 1575, 1000, "Parkland Health"), c: "#cf3f45" }, { ...tl("B", 1210, 1441, 364, "The Dallas"), c: "#3d8763" }, { ...tl("B", 1207, 1444, 448, "Arboretum"), c: "#3d8763" },
  { ...tl("B", 1175, 1478, 532, "and Botanical"), c: "#3d8763" }, { ...tl("B", 1247, 1405, 616, "Garden"), c: "#3d8763" }, { ...tl("B", 492, 1061, 1345, "Tenison Park Golf Course"), c: "#3d8763" },
  { ...tl("B", 496, 978, 1507, "Dallas Museum of Art"), c: "#7a45cf" }, { ...tl("B", -12, 197, 1489, "Trammell"), c: "#3d8763" }, { ...tl("D", -26, 208, 73, "Crow Park"), c: "#3d8763" },
  { ...tl("D", 14, 581, 658, "Stevens Park Golf Course"), c: "#3d8763" }, { ...tl("D", 938, 1099, 1043, "William"), c: "#3d8763" }, { ...tl("D", 877, 1161, 1127, "Blair Jr. Park"), c: "#3d8763" },
];

const SHIELDS: [string, number, number, string][] = [
  ["A", 705, 213, "114"], ["A", 973, 369, "482"], ["A", 790, 444, "12"], ["A", 1085, 720, "114"], ["A", 1154, 813, "183"], ["C", 749, 148, "12"], ["C", 716, 1525, "408"], ["C", 810, 1550, ""], ["B", 895, 5, ""],
];
const US_SHIELDS: [string, number, number, string][] = [["B", 748, 264, "75"], ["D", 555, 146, "75"], ["D", 914, 910, "175"]];
const INTERSTATES: [string, number, number, string][] = [["C", 153, 645, "30"], ["C", 677, 516, "30"], ["D", 369, 420, "35E"], ["D", 386, 525, "35E"], ["D", 882, 1512, "45"]];

const MARKERS: [string, number, number][] = [
  ["A", 1332, 826], ["A", 1307, 838], ["A", 1416, 1180], ["A", 1223, 1522], ["B", 420, 982], ["B", 777, 1073], ["B", 77, 1235], ["B", 575, 1522], ["B", 687, 1590],
  ["D", 391, 160], ["D", 679, 238], ["D", 809, 412], ["D", 294, 886], ["D", 113, 946], ["C", 45, 1138],
];

function Golfer() {
  return (
    <g stroke="#fff" fill="none" strokeWidth="1.2" strokeLinecap="round" strokeLinejoin="round">
      <path d="M-3.6 -4.2V-6H3.4L2.6 -3.8M2 -2.4L-2.6 -1L1 1.6L0.6 5.6M-2.6 -1L-3 2L-3.6 5.8" />
      <circle cx="0.8" cy="-3.8" r=".8" fill="#fff" stroke="none" />
      <circle cx="3.2" cy="5.4" r=".9" fill="#fff" stroke="none" />
    </g>
  );
}

const PINS: { p: [string, number, number]; c: string; icon: React.ReactNode }[] = [
  { p: ["A", 1491, 300], c: "#3b73e0", icon: <path fill="#fff" d="M0 -6.2C.7 -6.2 1 -5.4 1 -4.6V-1.6L6 1.6V2.9L1 1.3V4.2L2.7 5.4V6.3L0 5.6L-2.7 6.3V5.4L-1 4.2V1.3L-6 2.9V1.6L-1 -1.6V-4.6C-1 -5.4 -.7 -6.2 0 -6.2Z" /> },
  { p: ["A", 749, 1020], c: "#7d8f99", icon: <path fill="#fff" d="M-1.2 -6H1.2V-2.9H4V-1H1.2V6H-1.2V-1H-4V-2.9H-1.2Z" /> },
  {
    p: ["B", 257, 158], c: "#4396f7", icon: (
      <g>
        <path d="M-5 -5H-3.4L-1.8 2H3.8" fill="none" stroke="#fff" strokeWidth="1.1" />
        <path d="M-3 -3.8H4.8L3.6 .8H-2Z" fill="#fff" />
        <circle cx="-1.6" cy="4.4" r="1.1" fill="#fff" />
        <circle cx="3" cy="4.4" r="1.1" fill="#fff" />
      </g>
    ),
  },
  {
    p: ["B", 1326, 720], c: "#4da375", icon: (
      <g fill="#fff">
        {[0, 72, 144, 216, 288].map((r) => (
          <ellipse key={r} cx="0" cy="-4.1" rx="2.1" ry="2.9" transform={`rotate(${r})`} />
        ))}
        <circle r="1.2" fill="#4da375" />
      </g>
    ),
  },
  { p: ["B", 82, 958], c: "#e3565b", icon: <path fill="#fff" d="M-4.4 -5H-1.9V-1.2H1.9V-5H4.4V5H1.9V1.2H-1.9V5H-4.4Z" /> },
  { p: ["B", 1116, 1305], c: "#4da375", icon: <Golfer /> },
  {
    p: ["B", 440, 1467], c: "#a970f8", icon: (
      <g fill="none" stroke="#fff" strokeWidth="1.2">
        <path d="M-5.4 -1.6L0 -5.6L5.4 -1.6Z" fill="#fff" />
        <path d="M-4.4 -1.4V5H4.4V-1.4" />
        <path d="M-2 3.4V.6L0 2.6L2 .6V3.4" />
      </g>
    ),
  },
  {
    p: ["C", 1322, 623], c: "#4396f7", icon: (
      <g>
        <path d="M-4 -1.4H4L4.9 5H-4.9Z" fill="#fff" />
        <path d="M-2.3 -1.4V-2.8A2.3 2.6 0 0 1 2.3 -2.8V-1.4" fill="none" stroke="#fff" strokeWidth="1.1" />
        <path d="M-1.7 .6A1.7 1.8 0 0 0 1.7 .6" fill="none" stroke="#4396f7" strokeWidth="1.1" />
      </g>
    ),
  },
  { p: ["C", 1507, 618], c: "#4da375", icon: <Golfer /> },
  { p: ["C", 2, 290], c: "#4da375", icon: null },
];

function MapCanvas() {
  const halo = { stroke: "#fff", strokeWidth: 2.4, strokeLinejoin: "round" as const, paintOrder: "stroke" as const };
  return (
    <svg className="block h-[500px] w-[846px] bg-[#f7f7f7] font-['Roboto',sans-serif]" viewBox="0 0 846 500">
      <g fill="#f9f0de">{BEIGE.map((s) => <path key={s} d={area(s)} />)}</g>
      <g fill="#fbeae7">{PINK.map((s) => <path key={s} d={area(s)} />)}</g>
      <g fill="#cdefd8">{GREEN.map((s) => <path key={s} d={area(s)} />)}</g>
      <g fill="#dbf6e5">{PALE.map((s) => <path key={s} d={area(s)} />)}</g>
      <path d={area(AIRPORT)} fill="#dde4f4" />
      <g stroke="#eaf0fa" strokeWidth="2" fill="none">{RUNWAYS.map((s) => <path key={s} d={line(s)} />)}</g>
      <g fill="#a1d8ec">{WATER.map((s) => <path key={s} d={area(s)} />)}</g>
      <g stroke="#a1d8ec" strokeWidth=".9" fill="none" strokeLinejoin="round">{STREAMS.map((s) => <path key={s} d={line(s)} />)}</g>
      <path d={line("C 208 945 208 1420")} stroke="#e4e9f7" strokeWidth="2.6" />
      <g stroke="#dcdde1" strokeWidth=".9" fill="none">{RAILS.map((s) => <path key={s} d={line(s)} />)}</g>
      <g stroke="#dcdde1" strokeWidth="4" strokeDasharray=".8 8" fill="none">{RAILS.map((s) => <path key={s} d={line(s)} />)}</g>
      <g stroke="#dae0e8" strokeWidth="1.1" fill="none">{MINOR.map((s) => <path key={s} d={line(s)} />)}</g>
      <g stroke="#d6dee7" strokeWidth="2.5" fill="none" strokeLinejoin="round">{MAJOR.map((s) => <path key={s} d={line(s)} />)}</g>
      <g fill="#a9b7d6">{INTERCHANGES.map((s) => <path key={s} d={area(s)} />)}</g>
      <g stroke="#7583b3" fill="none" strokeLinejoin="round">{HIGHWAYS.map(([s, w]) => <path key={s} d={line(s)} strokeWidth={w + 0.7} />)}</g>
      <g stroke="#a9b7d6" fill="none" strokeLinejoin="round">{HIGHWAYS.map(([s, w]) => <path key={s} d={line(s)} strokeWidth={w - 0.3} />)}</g>

      <g fontSize="9.8" fontWeight="500" fill="#2e3136">
        {AREAS.map((l) => <text key={l.t + l.x} x={l.x} y={l.y + 0.2} textLength={l.w} {...halo}>{l.t}</text>)}
      </g>
      <g fontWeight="500" fill="#26282c">
        {TOWNS.map((l) => <text key={l.t + l.x} x={l.x} y={l.y} textLength={l.w} lengthAdjust="spacingAndGlyphs" fontSize={l.s} {...halo}>{l.t}</text>)}
      </g>
      <g fontSize="10.4" fill="#2f3c5c">
        <text x={at("A", 577, 550)[0]} y={at("A", 577, 552)[1]} textLength="89" lengthAdjust="spacingAndGlyphs" {...halo}>Texas 183 TExpress</text>
        <text transform={`translate(${at("C", 335, 611).join(" ")}) rotate(-10)`} textLength="79" lengthAdjust="spacingAndGlyphs" {...halo}>Interstate 30 HOV</text>
      </g>
      <g fontSize="14.2">
        {POIS.map((l) => <text key={l.t + l.x} x={l.x} y={l.y} textLength={l.w} lengthAdjust="spacingAndGlyphs" fill={l.c} {...halo}>{l.t}</text>)}
      </g>

      {SHIELDS.map(([t, x, y, n]) => {
        const [cx, cy] = at(t, x, y);
        const w = n.length > 2 || !n ? 19.5 : 16;
        return (
          <g key={`${t}${x}`}>
            <rect x={cx - w / 2} y={cy - 6.4} width={w} height="12.8" rx="5" fill="#fff" stroke="#666" strokeWidth="1" />
            <text x={cx} y={cy + 3.4} fontSize="9.6" textAnchor="middle" fill="#3c3f43">{n}</text>
          </g>
        );
      })}
      {US_SHIELDS.map(([t, x, y, n]) => {
        const [cx, cy] = at(t, x, y);
        return (
          <g key={`${t}${x}`} transform={`translate(${cx} ${cy - 0.5})`}>
            <path transform={n.length > 2 ? "scale(1.12 1)" : undefined} d="M-7 -7.2C-5.6 -6.4 -4.2 -6.6 -3 -7.6Q-1.4 -6.6 0 -7.4Q1.4 -6.6 3 -7.6C4.2 -6.6 5.6 -6.4 7 -7.2L8.8 -4.6C7.6 -2 8.8 .4 8.8 2.6C8.8 6.4 3.6 5.8 0 8.2C-3.6 5.8 -8.8 6.4 -8.8 2.6C-8.8 .4 -7.6 -2 -8.8 -4.6Z" fill="#fff" stroke="#5f6368" strokeWidth="1" />
            <text y="3.8" fontSize="9.6" textAnchor="middle" fill="#3c3f43">{n}</text>
          </g>
        );
      })}
      {INTERSTATES.map(([t, x, y, n]) => {
        const [cx, cy] = at(t, x, y);
        return (
          <g key={`${t}${x}${y}`} transform={`translate(${cx} ${cy})`} opacity={n === "45" ? 0.35 : 1}>
            <g transform={n.length > 2 ? "scale(1.34 1)" : undefined}>
              <path d="M-7.4 -4.2C-8.4 2 -5 6.4 0 8.2C5 6.4 8.4 2 7.4 -4.2Z" fill="#4876c4" />
              <path d="M-7.2 -4.6L-6.8 -7.6Q-5 -6.8 -3.6 -8Q-1.6 -7 0 -7.8Q1.6 -7 3.6 -8Q5 -6.8 6.8 -7.6L7.2 -4.6Z" fill="#cb6863" />
              <path d="M-7.4 -4.3H7.4" stroke="#fff" strokeWidth=".7" />
            </g>
            <text y="4.2" fontSize="9" fontWeight="600" textAnchor="middle" fill="#fff">{n}</text>
          </g>
        );
      })}
      {PINS.map(({ p, c, icon }) => {
        const [cx, cy] = at(...p);
        return (
          <g key={p.join()} transform={`translate(${cx} ${cy})`}>
            <path d="M0 15C-1.6 15 -2.2 12.8 -4 11C-8 9.6 -11.8 5.6 -11.8 0A11.8 11.8 0 0 1 11.8 0C11.8 5.6 8 9.6 4 11C2.2 12.8 1.6 15 0 15Z" fill="#0003" transform="translate(0 .8)" />
            <path d="M0 15C-1.6 15 -2.2 12.8 -4 11C-8 9.6 -11.8 5.6 -11.8 0A11.8 11.8 0 0 1 11.8 0C11.8 5.6 8 9.6 4 11C2.2 12.8 1.6 15 0 15Z" fill="#fff" />
            <circle r="10.1" fill={c} />
            {icon}
          </g>
        );
      })}
      {MARKERS.map(([t, x, y]) => (
        <g key={`${t}${x}`} transform={`translate(${at(t, x, y).join(" ")})`}>
          <path d="M0 -.2C-1 -5.8 -2.6 -10 -5.8 -13.8C-9.6 -18 -12.4 -20.4 -12.4 -24.3A12.4 12.2 0 0 1 12.4 -24.3C12.4 -20.4 9.6 -18 5.8 -13.8C2.6 -10 1 -5.8 0 -.2Z" fill="#d94f40" stroke="#b3372b" strokeWidth=".9" />
          <circle cy="-23.7" r="4.9" fill="#a5281f" />
        </g>
      ))}
      <text x="10.6" y="491.8" fontSize="19.5" fontWeight="500" fontFamily="Lato, sans-serif" textLength="55" lengthAdjust="spacingAndGlyphs" stroke="#fff" strokeWidth="2" paintOrder="stroke">
        <tspan fill="#5383ec">G</tspan><tspan fill="#d85040">o</tspan><tspan fill="#f1bf42">o</tspan><tspan fill="#5383ec">g</tspan><tspan fill="#58a55c">l</tspan><tspan fill="#d85040">e</tspan>
      </text>
    </svg>
  );
}

function MapPanel() {
  return (
    <div className="relative h-[500px] overflow-hidden font-['Roboto',sans-serif]">
      <MapCanvas />
      <div className="absolute top-[10px] left-[10px] flex h-10 w-[169px] rounded-[2px] bg-white text-[18px] shadow-[0_1px_4px_rgba(0,0,0,0.3)]">
        <div className="flex w-[69px] items-center justify-center border-r border-[#e9e9e9] font-medium text-black">Map</div>
        <div className="flex flex-1 items-center justify-center text-[#565656]">Satellite</div>
      </div>
      <div className="absolute top-[10px] right-[10px] flex size-10 items-center justify-center rounded-[2px] bg-white shadow-[0_1px_4px_rgba(0,0,0,0.3)]">
        <svg className="size-[18px]" viewBox="0 0 18 18" fill="#666">
          <path d="M0 0v6h2V2h4V0H0zm16 0h-4v2h4v4h2V0h-2zm0 16h-4v2h6v-6h-2v4zM2 12H0v6h6v-2H2v-4z" />
        </svg>
      </div>
      <div className="absolute top-[323px] right-[10px] flex size-10 items-center justify-center rounded-[2px] bg-white shadow-[0_1px_4px_rgba(0,0,0,0.3)]">
        <svg className="h-[31px] w-[18px]" viewBox="0 0 18 31">
          <g fill="#f2bd42" stroke="#8b7b52" strokeWidth=".7" strokeLinejoin="round">
            <path d="M4.5 10.2C2.8 11 1.6 15 .6 21.2L2.6 22L4.4 17.6L4.8 30.2H8.4L9 22.5L9.6 30.2H13.2L13.6 17.6L15.4 22L17.4 21.2C16.4 15 15.2 11 13.5 10.2Z" />
            <circle cx="9" cy="5.8" r="5.2" />
          </g>
          <path d="M5 10.6H13L9 16.4Z" fill="#d6803c" />
        </svg>
      </div>
      <div className="absolute top-[395px] right-[10px] flex h-[81px] w-10 flex-col items-center rounded-[2px] bg-white shadow-[0_1px_4px_rgba(0,0,0,0.3)]">
        <svg className="my-[11px] size-[18px]" viewBox="0 0 18 18" fill="#666"><path d="M18 7h-7V0H7v7H0v4h7v7h4v-7h7z" /></svg>
        <div className="h-px w-[30px] bg-[#e6e6e6]" />
        <svg className="my-[11px] size-[18px]" viewBox="0 0 18 18" fill="#666"><path d="M0 7h18v4H0z" /></svg>
      </div>
      <div className="absolute right-0 bottom-0 flex h-[14px] items-center gap-[12.6px] bg-[#f5f5f5]/70 pr-[6px] pl-[5px] text-[10px] leading-[14px] whitespace-nowrap text-black">
        <span>Keyboard shortcuts</span>
        <span>Map data ©2024 Google</span>
        <span>Terms</span>
        <span>Report a map error</span>
      </div>
    </div>
  );
}

/* ------------------------------------------------------------------ */

function Logo() {
  const gold = "#d8c946";
  const navy = "#2b2d8d";
  const letters: [string, number, number][] = [["S", 31, 98], ["T", 143, 144], ["R", 587, 132], ["M", 738, 178]];
  return (
    <svg className="h-[57.5px] w-[160px]" viewBox="0 0 960 345">
      <g fill={gold} fontFamily="'Liberation Serif', serif" fontSize="207">
        {letters.map(([c, x, w]) => (
          <text key={c} x={x} y="238" textLength={w} lengthAdjust="spacingAndGlyphs" stroke={gold} strokeWidth="5">{c}</text>
        ))}
      </g>
      <g stroke="#fff" strokeWidth="2.6" fill="none">
        <path d="M209 112V232M636 112V232M762 118L826 226M882 116V232M54 128C50 150 64 164 92 174C114 182 120 196 114 214" />
      </g>
      <g fill={navy} fontFamily="'Open Sans', sans-serif" fontWeight="700" fontSize="29">
        <text x="37" y="275" textLength="271" lengthAdjust="spacingAndGlyphs">CENTER OF HOPE</text>
        <text x="566" y="275" textLength="208" lengthAdjust="spacingAndGlyphs">AND SERVICE</text>
      </g>
      <g fill={gold}>
        <path d="M557 102C528 62 486 36 432 34C366 32 320 76 319 136C318 180 352 206 392 197C408 193 424 180 434 168C416 182 398 184 382 180C358 174 344 156 343 132C343 80 386 44 432 44C486 46 528 68 557 102Z" />
        <path d="M404 178C424 148 444 132 474 132C494 132 508 144 520 154C530 160 532 168 530 176C524 166 512 168 500 166C482 162 462 160 446 168C432 168 418 172 404 178Z" />
        <path d="M304 138C296 186 320 214 356 214C392 214 418 200 440 178C410 204 372 206 346 196C322 186 306 166 304 138Z" />
        <path d="M306 200C326 234 390 236 444 188C430 228 388 254 350 246C330 240 314 224 306 200Z" />
        <path d="M316 240C348 268 396 258 434 216C424 250 396 274 366 272C342 270 326 258 316 240Z" />
        <path d="M340 284C372 296 398 284 420 258C416 286 402 306 380 308C362 308 350 300 340 284Z" />
      </g>
      <path d="M444 156C458 145 480 142 498 154" stroke="#fff" strokeWidth="3" fill="none" />
      <path d="M484 152L498 150L490 158Z" fill="#fff" />
      <g fill={navy}>
        <path d="M569 126C582 178 574 244 518 249C480 248 466 212 482 170C458 196 460 236 486 250C536 270 596 216 569 126Z" />
        <path d="M500 168C470 164 440 190 426 236C412 282 424 310 456 308C476 304 480 302 486 298C452 304 436 272 448 226C456 192 474 174 500 168Z" />
        <path d="M466 188C446 222 444 266 474 276C496 282 522 274 540 260C494 266 464 238 466 188Z" />
        <path d="M450 252C448 276 464 292 490 296C504 296 516 290 526 284C494 288 466 276 450 252Z" />
      </g>
    </svg>
  );
}

function NavItem({ icon: Icon, label, active }: { icon: React.ElementType; label: string; active?: boolean }) {
  return (
    <a
      className={
        active
          ? "flex h-9 items-center gap-3 rounded-xl bg-[#171717] px-4 text-sm text-[#fafafa] shadow"
          : "flex h-9 items-center gap-3 rounded-md px-4 text-sm text-[#0a0a0a]"
      }
    >
      <Icon className="size-4" />
      {label}
    </a>
  );
}

function QrScan({ className }: { className?: string }) {
  return (
    <svg className={className} viewBox="0 0 24 24" fill="none" stroke="currentColor" strokeWidth="2" strokeLinecap="round" strokeLinejoin="round">
      <path d="M17 12v4a1 1 0 0 1-1 1h-4" />
      <path d="M17 3h2a2 2 0 0 1 2 2v2" />
      <path d="M17 8V7" />
      <path d="M21 17v2a2 2 0 0 1-2 2h-2" />
      <path d="M3 7V5a2 2 0 0 1 2-2h2" />
      <path d="M7 17h.01" />
      <path d="M7 21H5a2 2 0 0 1-2-2v-2" />
      <rect x="7" y="7" width="5" height="5" rx="1" />
    </svg>
  );
}

const RESULTS = [
  ["Brother Bill's Helping Hand", "3906 N Westmoreland Rd, Dallas, TX 75212, United States"],
  ["United Way of Metropolitan Dallas", "1800 N Lamar St, Dallas, TX 75202, United States"],
  ["Services of Hope Entities Inc", "1137 Conveyor Ln, Dallas, TX 75247, United States"],
  ["North Dallas Shared Ministries", "2875 Merrell Rd, Dallas, TX 75229, United States"],
];

function Sidebar() {
  return (
    <aside className="w-[280px] shrink-0 border-[1.1px] border-b-0 border-[#e5e5e5] px-4 pt-4">
      <nav className="flex flex-col gap-1">
        <a className="flex h-9 items-center justify-between rounded-md bg-[#3e68f3] px-4 text-sm font-bold text-white shadow">
          Call Now
          <kbd className="flex h-[26px] w-[42px] items-center justify-center gap-[5px] rounded-lg border-[1.1px] border-[#cdd2ea] bg-[#e9ecfb] font-['Liberation_Sans',sans-serif] text-xs font-normal text-[#374151]">
            <Command className="size-3 text-[#6b7280]" strokeWidth={2} />C
          </kbd>
        </a>
        <NavItem icon={Calendar} label="Events" />
        <NavItem icon={Search} label="Search" />
      </nav>
      <div className="my-5 h-px bg-[#cdd2e9]" />
      <nav className="flex flex-col gap-1">
        <NavItem icon={Users} label="Community Chat" />
        <NavItem icon={Users} label="Mentor Meetings" />
        <NavItem icon={MapIcon} label="Resources" active />
        <NavItem icon={CircleDollarSign} label="Rewards" />
        <NavItem icon={QrScan} label="My Pass" />
      </nav>
    </aside>
  );
}

function ResourceCard() {
  return (
    <section className="h-[1200px] w-[896px] rounded-xl border-[1.1px] border-[#e5e5e5] px-6 pt-6 shadow">
      <h1 className="text-center text-3xl leading-9 font-bold tracking-tight">Find Local Resources</h1>
      <div className="mt-10 flex h-9 items-center rounded-md border-[1.1px] border-[#e5e5e5] px-3 text-sm shadow-xs">Dallas, TX, USA</div>
      <div className="mt-4 flex h-[38px] items-center rounded border-[1.1px] border-[#cccccc] bg-white">
        <span className="flex-1 pl-[10px] text-base text-[#333]">Financial Assistance</span>
        <span className="h-5 w-px bg-[#cccccc]" />
        <svg className="m-2 size-5 fill-[#cccccc]" viewBox="0 0 20 20">
          <path d="M4.516 7.548c0.436-0.446 1.043-0.481 1.576 0l3.908 3.747 3.908-3.747c0.533-0.481 1.141-0.446 1.574 0 0.436 0.445 0.408 1.197 0 1.615-0.406 0.418-4.695 4.502-4.695 4.502-0.217 0.223-0.502 0.335-0.787 0.335s-0.57-0.112-0.789-0.335c0 0-4.287-4.084-4.695-4.502s-0.436-1.17 0-1.615z" />
        </svg>
      </div>
      <button className="mt-4 flex h-9 w-full items-center justify-center rounded-md bg-[#171717] text-sm text-[#fafafa] shadow">Search</button>
      <div className="mt-4">
        <MapPanel />
      </div>
      <h2 className="mt-[16.5px] mb-[7.5px] text-xl leading-7 font-bold">Search Results</h2>
      <ul className="flex flex-col gap-2">
        {RESULTS.map(([name, address]) => (
          <li key={name} className="rounded bg-[#f3f4f6] px-2 pt-[8.5px] pb-[7.5px]">
            <p className="text-base leading-6">{name}</p>
            <p className="text-sm leading-5 text-[#4b5563]">{address}</p>
          </li>
        ))}
      </ul>
    </section>
  );
}

export default function App() {
  return (
    <div className="relative h-[1204.2px] w-[2056px] overflow-hidden bg-[#15150f] font-['Liberation_Sans',sans-serif] text-[#0a0a0a] [zoom:1.99222]">
      <div className="flex h-[1204.2px] w-[2056px] overflow-hidden rounded-b-[10px] bg-white">
        <div className="flex w-[2041px] shrink-0 flex-col">
          <header className="flex h-[89px] shrink-0 items-center justify-between border-b-[1.1px] border-[#dedede] pr-10 pl-5 shadow-2xs">
            <Logo />
            <div className="flex h-9 items-center gap-2 rounded-full bg-[#fdf8c9] px-3 font-['Inter',sans-serif] text-sm font-semibold tracking-[0.13px] text-[#9a6324]">
              <svg className="size-5" viewBox="0 0 24 24" fill="none" stroke="#c68f2f" strokeWidth="2" strokeLinecap="round" strokeLinejoin="round">
                <circle cx="12" cy="8" r="6" />
                <path d="M15.477 12.89 17 22l-5-3-5 3 1.523-9.11" />
              </svg>
              650 Points
            </div>
          </header>
          <div className="flex flex-1 overflow-hidden border-x-[1.1px] border-[#e5e5e5]">
            <Sidebar />
            <main className="flex flex-1 justify-center pt-8">
              <ResourceCard />
            </main>
          </div>
        </div>
        <div className="flex flex-1 justify-center border-r border-l-[1.1px] border-[#e8e8e8] bg-[#fafafa] pt-[3px]">
          <div className="h-[621px] w-2 rounded-full bg-[#c1c1c1]" />
        </div>
      </div>
      <div className="absolute right-[31px] bottom-[16.2px] flex size-[55px] items-center justify-center rounded-full bg-black shadow-[0_4px_14px_rgba(0,0,0,0.35)]">
        <svg className="h-[26px] w-8" viewBox="0 0 192 156">
          <path d="M36 4H156Q190 4 190 38V100Q190 134 156 134H114L98 152Q95 156 91 152L76 134H36Q2 134 2 100V38Q2 4 36 4Z" fill="#fff" />
          <path d="M151 50Q157 88 192 94Q157 100 151 138Q145 100 106 94Q145 88 151 50ZM113 48Q115 57 124 59Q115 61 113 70Q111 61 102 59Q111 57 113 48Z" fill="#000" />
        </svg>
      </div>
    </div>
  );
}
